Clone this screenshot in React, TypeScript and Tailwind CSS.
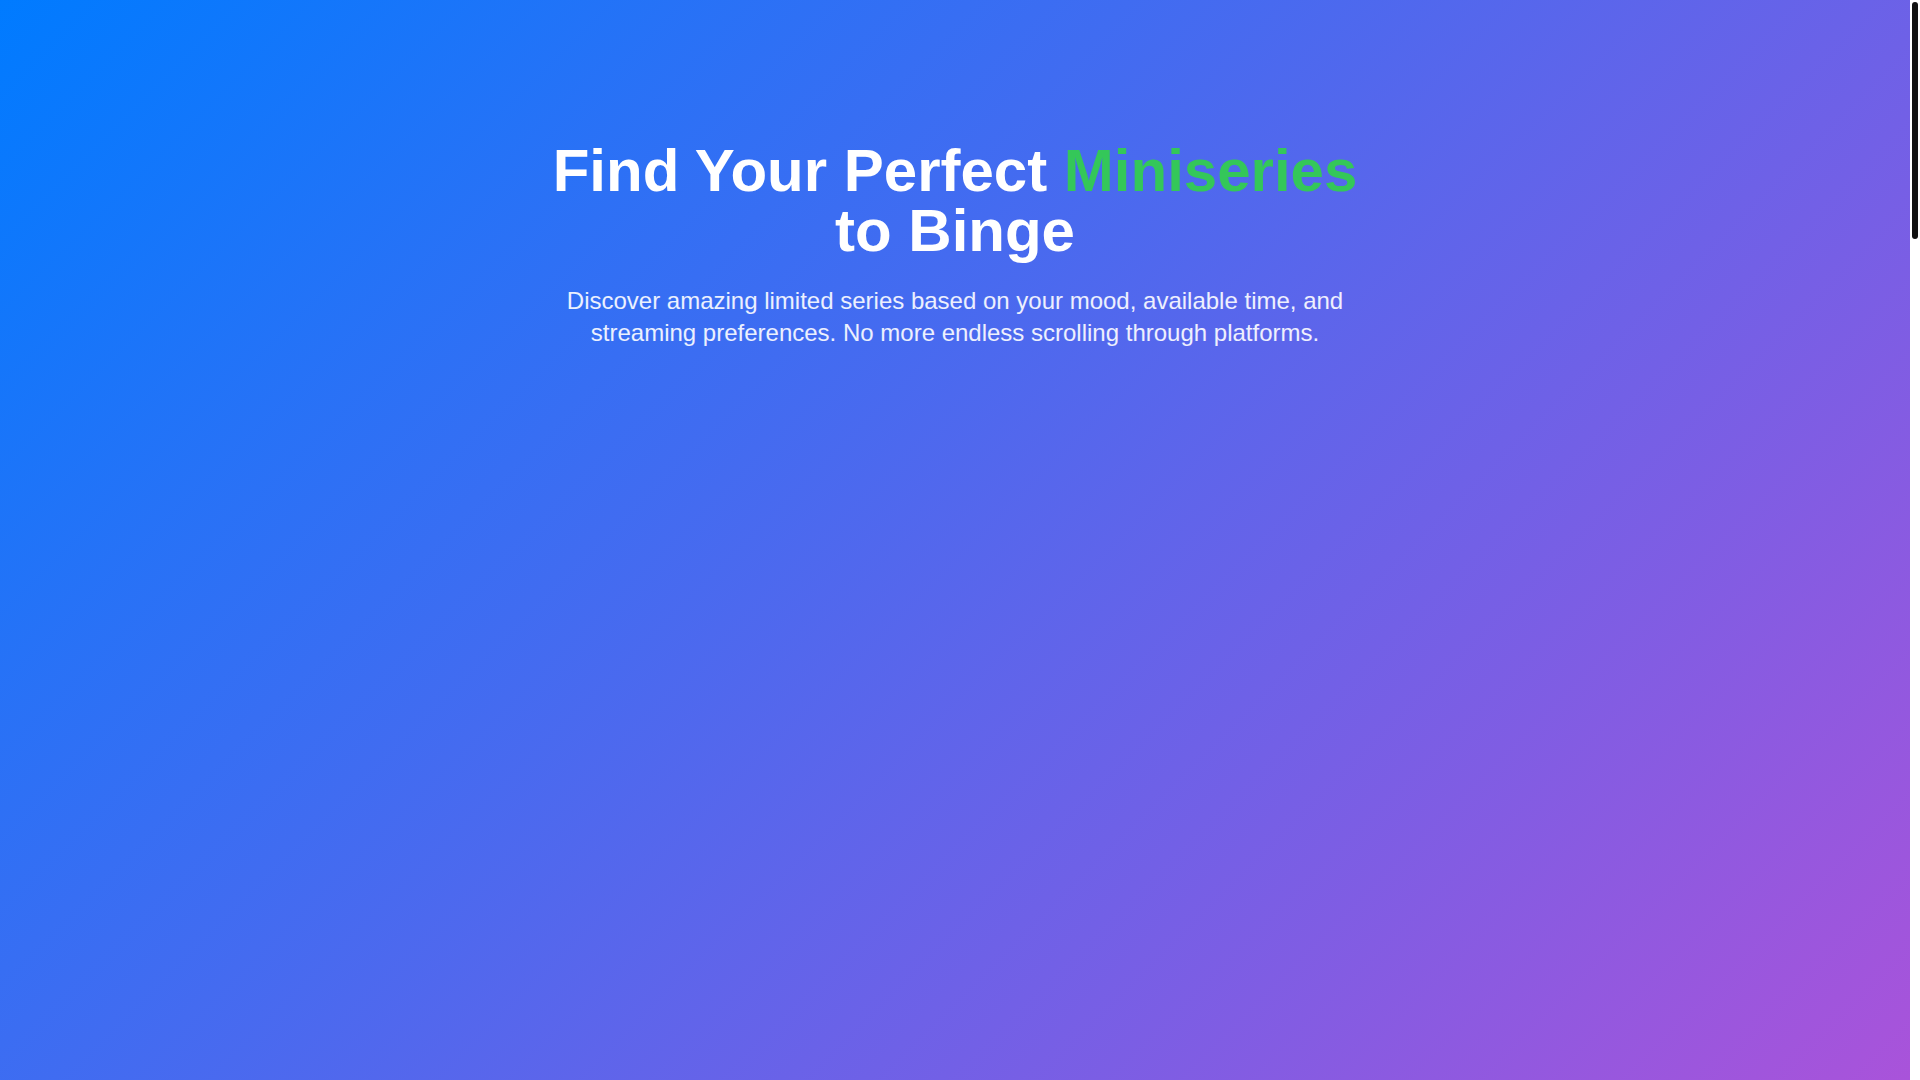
export default function App() {
  return (
    <div className="h-screen overflow-y-auto pr-[10px] font-['Liberation_Sans',Arial,sans-serif]">
      {/* Hero */}
      <section className="h-screen bg-[linear-gradient(135deg,#007bff_0%,#a953da_100%)] text-white">
        <div className="mx-auto max-w-4xl px-4 pt-[141px] text-center">
          <h1 className="mb-6 text-6xl font-bold leading-none">
            Find Your Perfect <span className="text-[#34c759]">Miniseries</span> to Binge
          </h1>
          <p className="mx-auto max-w-[800px] text-2xl text-white/90">
            Discover amazing limited series based on your mood, available time, and streaming preferences. No more endless
            scrolling through platforms.
          </p>
        </div>
      </section>
      {/* rest of the page (not yet visible) */}
      <div className="h-[3840px]" />

      {/* scrollbar */}
      <div className="fixed right-0 top-0 h-screen w-[10px] bg-white">
        <div className="mx-auto mt-[2px] h-[237px] w-[6px] rounded-full bg-[#111]" />
      </div>
    </div>
  );
}
